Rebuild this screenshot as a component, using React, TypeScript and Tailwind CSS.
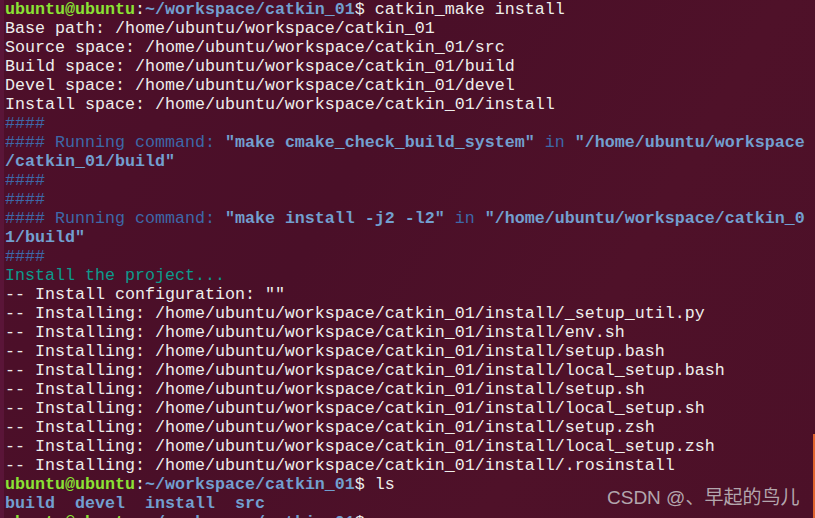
type Seg = { t: string; c?: string };

const W = "text-[#eeeeec]";
const GREEN = "text-[#8ae234] font-bold";
const BLUE = "text-[#729fcf] font-bold";
const DIM = "text-[#3d68a8]";
const TEAL = "text-[#0c9a8c]";

const prompt = (cmd: string): Seg[] => [
  { t: "ubuntu@ubuntu", c: GREEN },
  { t: ":", c: W },
  { t: "~/workspace/catkin_01", c: BLUE },
  { t: "$ " + cmd, c: W },
];

const base = "/home/ubuntu/workspace/catkin_01";
const installed = [
  "_setup_util.py",
  "env.sh",
  "setup.bash",
  "local_setup.bash",
  "setup.sh",
  "local_setup.sh",
  "setup.zsh",
  "local_setup.zsh",
  ".rosinstall",
];

const lines: Seg[][] = [
  prompt("catkin_make install"),
  [{ t: `Base path: ${base}` }],
  [{ t: `Source space: ${base}/src` }],
  [{ t: `Build space: ${base}/build` }],
  [{ t: `Devel space: ${base}/devel` }],
  [{ t: `Install space: ${base}/install` }],
  [{ t: "####", c: DIM }],
  [
    { t: "#### Running command: ", c: DIM },
    { t: '"make cmake_check_build_system"', c: BLUE },
    { t: " in ", c: DIM },
    { t: '"/home/ubuntu/workspace', c: BLUE },
  ],
  [{ t: '/catkin_01/build"', c: BLUE }],
  [{ t: "####", c: DIM }],
  [{ t: "####", c: DIM }],
  [
    { t: "#### Running command: ", c: DIM },
    { t: '"make install -j2 -l2"', c: BLUE },
    { t: " in ", c: DIM },
    { t: '"/home/ubuntu/workspace/catkin_0', c: BLUE },
  ],
  [{ t: '1/build"', c: BLUE }],
  [{ t: "####", c: DIM }],
  [{ t: "Install the project...", c: TEAL }],
  [{ t: '-- Install configuration: ""' }],
  ...installed.map((f) => [{ t: `-- Installing: ${base}/install/${f}` }]),
  prompt("ls"),
  [{ t: "build  devel  install  src", c: BLUE }],
  prompt(""),
];

export default function App() {
  return (
    <div className="relative w-[815px] h-[518px] overflow-hidden bg-[linear-gradient(120deg,#4e0f2a_0%,#4a0f28_40%,#4f1129_70%,#4c1028_100%)] border-l-4 border-[#5a1538]">
      <div
        className="pl-[1px] pt-0 text-[16.67px] leading-[19px] whitespace-pre text-[#eeeeec]"
        style={{ fontFamily: '"Liberation Mono", "Courier New", monospace' }}
      >
        {lines.map((segs, i) => (
          <div key={i} className="h-[19px]">
            {segs.map((s, j) => (
              <span key={j} className={s.c ?? W}>
                {s.t}
              </span>
            ))}
          </div>
        ))}
      </div>
      <div
        className="absolute left-[603px] top-[486px] text-[19px] leading-[24px] text-[#b3a6ad] whitespace-nowrap"
        style={{ fontFamily: '"Liberation Sans", "Noto Sans CJK SC", sans-serif' }}
      >
        CSDN @、早起的鸟儿
      </div>
      <div className="absolute right-0 top-[434px] w-[2px] h-[84px] bg-[#e0642e]" />
    </div>
  );
}
